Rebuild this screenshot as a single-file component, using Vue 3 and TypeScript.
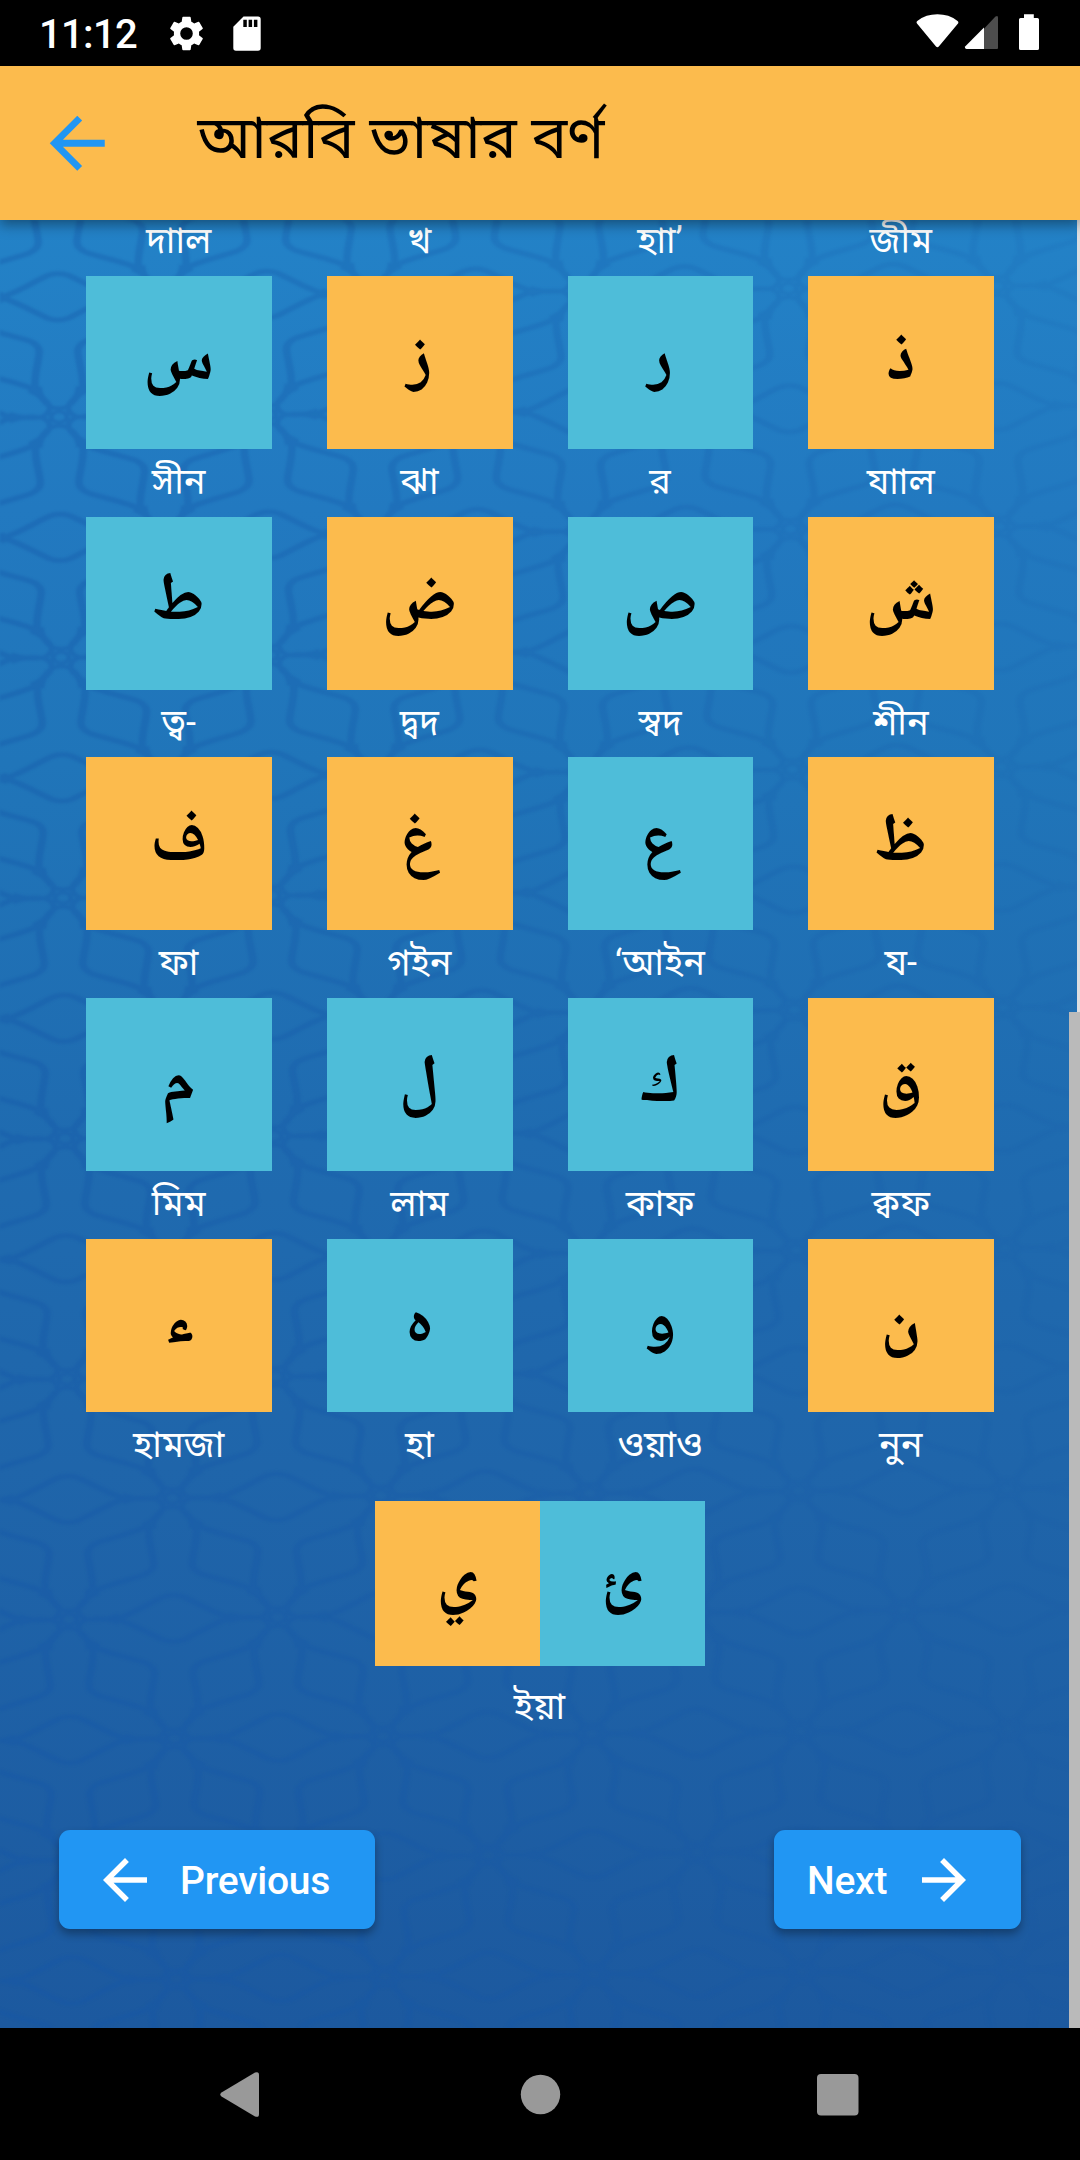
<script setup lang="ts">
type Tone = 'amber' | 'teal'

interface Letter {
  glyph: string
  name: string
  tone: Tone
}

const hiddenRowNames: string[] = ['দাাল', 'খ', 'হাা’', 'জীম']

const letters: Letter[] = [
  { glyph: 'س', name: 'সীন', tone: 'teal' },
  { glyph: 'ز', name: 'ঝা', tone: 'amber' },
  { glyph: 'ر', name: 'র', tone: 'teal' },
  { glyph: 'ذ', name: 'যাাল', tone: 'amber' },
  { glyph: 'ط', name: 'ত্ব-', tone: 'teal' },
  { glyph: 'ض', name: 'দ্বদ', tone: 'amber' },
  { glyph: 'ص', name: 'স্বদ', tone: 'teal' },
  { glyph: 'ش', name: 'শীন', tone: 'amber' },
  { glyph: 'ف', name: 'ফা', tone: 'amber' },
  { glyph: 'غ', name: 'গইন', tone: 'amber' },
  { glyph: 'ع', name: '‘আইন', tone: 'teal' },
  { glyph: 'ظ', name: 'য-', tone: 'amber' },
  { glyph: 'م', name: 'মিম', tone: 'teal' },
  { glyph: 'ل', name: 'লাম', tone: 'teal' },
  { glyph: 'ك', name: 'কাফ', tone: 'teal' },
  { glyph: 'ق', name: 'ক্বফ', tone: 'amber' },
  { glyph: 'ء', name: 'হামজা', tone: 'amber' },
  /* U+06D5 keeps the round isolated shape of the letter */
  { glyph: '\u06d5', name: 'হা', tone: 'teal' },
  { glyph: 'و', name: 'ওয়াও', tone: 'teal' },
  { glyph: 'ن', name: 'নুন', tone: 'amber' },
]

/* Star lattice of the backdrop: stars sit on the corners and in the middle of each tile. */
const stars: [number, number][] = [
  [0, 0], [208.7, 0], [0, 361.1], [208.7, 361.1], [104.35, 180.55],
]
const petalAngles: number[] = [30, 90, 150, 210, 270, 330]
const edgeAngles: number[] = [0, 60, 120, 180, 240, 300]
</script>

<template>
  <div class="screen">
    <div class="status">
      <span class="clock">11:12</span>
      <svg class="gear" viewBox="2 2 20 20"><path fill="#fff" fill-rule="evenodd" d="M19.14 12.94c.04-.3.06-.61.06-.94 0-.32-.02-.64-.07-.94l2.03-1.58a.49.49 0 0 0 .12-.61l-1.92-3.32a.49.49 0 0 0-.59-.22l-2.39.96c-.5-.38-1.03-.7-1.62-.94l-.36-2.54a.48.48 0 0 0-.48-.41h-3.84a.47.47 0 0 0-.47.41l-.36 2.54c-.59.24-1.13.57-1.62.94l-2.39-.96a.48.48 0 0 0-.59.22L2.74 8.87a.48.48 0 0 0 .12.61l2.03 1.58c-.05.3-.09.63-.09.94s.02.64.07.94l-2.03 1.58a.49.49 0 0 0-.12.61l1.92 3.32c.12.22.37.29.59.22l2.39-.96c.5.38 1.03.7 1.62.94l.36 2.54c.05.24.24.41.48.41h3.84c.24 0 .44-.17.47-.41l.36-2.54c.59-.24 1.13-.56 1.62-.94l2.39.96c.22.08.47 0 .59-.22l1.92-3.32a.47.47 0 0 0-.12-.61zM12 15.6a3.6 3.6 0 1 1 0-7.2 3.6 3.6 0 0 1 0 7.2z" /></svg>
      <svg class="sd" viewBox="0 0 28 35"><path fill="#fff" fill-rule="evenodd" d="M10.500 .5H25a2.700 2.700 0 0 1 2.700 2.700V32a2.700 2.700 0 0 1-2.700 2.700H3A2.700 2.700 0 0 1 .3 32V10.700zM10.300 3.700V11h3.500V3.700zM15.600 3.700V11h3.500V3.700zM20.900 3.700V11h3.500V3.700z" /></svg>
      <svg class="radio" viewBox="0 0 124 38">
        <path fill="#fff" d="M1.200 9.800Q-.3 8 1.600 6.700Q10 .3 21.400 .3Q33 .3 41.200 6.700Q43.200 8 41.800 9.800L22.800 32.400Q21.400 34 20 32.400Z" />
        <path fill="#4d4d4d" d="M68 14.800L79.500 2.600Q82 1 82 3.500V34a1 1 0 0 1-1 1H68z" />
        <path fill="#fff" d="M68 13.500V35H50.500Q48 34.500 49.400 32.300z" />
        <path fill="#fff" d="M108 .2h9.800V4h3.600a1.600 1.600 0 0 1 1.600 1.600v28.800a1.600 1.600 0 0 1-1.600 1.600h-16.800a1.600 1.600 0 0 1-1.600-1.600V5.600A1.600 1.600 0 0 1 104.600 4h3.400z" />
      </svg>
    </div>

    <header class="bar">
      <svg class="back" viewBox="0 0 24 24"><path fill="#2196f3" d="M20 11H7.830l5.590-5.590L12 4l-8 8 8 8 1.410-1.410L7.830 13H20z" /></svg>
      <h1>আরবি ভাষার বর্ণ</h1>
    </header>

    <main class="content">
      <svg class="backdrop" width="1080" height="1808" viewBox="0 220 1080 1808">
        <defs>
          <pattern id="stars" width="208.7" height="361.1" patternUnits="userSpaceOnUse" patternTransform="matrix(1 -0.0113 0.0055 0.666 69 1619.5)">
            <g v-for="(s, i) in stars" :key="i" :transform="`translate(${s[0]} ${s[1]})`" fill="none" stroke="#1456a8" stroke-width="7.5">
              <path v-for="a in petalAngles" :key="`p${a}`" :transform="`rotate(${a})`" d="M46 20C34 19 13 15 13 0C13-15 34-19 46-20" stroke-width="6" />
              <path v-for="a in edgeAngles" :key="`e${a}`" :transform="`rotate(${a})`" d="M24 0H46C60 4 80 23 94 32Q99 35 104.350 35M46 0C60-4 80-23 94-32Q99-35 104.350-35" />
              <circle r="8" stroke-width="5" />
            </g>
          </pattern>
          <linearGradient id="fade" x1="0" x2="1" y1="0" y2="0">
            <stop offset="0" stop-color="#fff" stop-opacity=".34" />
            <stop offset=".45" stop-color="#fff" stop-opacity=".24" />
            <stop offset="1" stop-color="#fff" stop-opacity=".09" />
          </linearGradient>
          <mask id="veil" maskUnits="userSpaceOnUse" x="0" y="220" width="1080" height="1808"><rect y="220" width="1080" height="1808" fill="url(#fade)" /></mask>
        </defs>
        <g mask="url(#veil)"><rect class="weave" y="220" width="1080" height="1808" fill="url(#stars)" /></g>
      </svg>

      <div class="names">
        <span v-for="n in hiddenRowNames" :key="n" class="name">{{ n }}</span>
      </div>
      <div class="grid">
        <div v-for="l in letters" :key="l.glyph" class="cell">
          <div class="tile" :class="l.tone"><span class="glyph">{{ l.glyph }}</span></div>
          <span class="name">{{ l.name }}</span>
        </div>
      </div>

      <div class="pair">
        <div class="half amber"><span class="glyph">ي</span></div>
        <div class="half teal"><span class="glyph">ئ</span></div>
      </div>
      <span class="name last">ইয়া</span>

      <div class="actions">
        <button class="prev">
          <svg viewBox="0 0 24 24"><path fill="#fff" d="M20 11H7.830l5.590-5.590L12 4l-8 8 8 8 1.410-1.410L7.830 13H20z" /></svg>
          <span>Previous</span>
        </button>
        <button class="next">
          <span>Next</span>
          <svg viewBox="0 0 24 24"><path fill="#fff" d="M4 11h12.170l-5.590-5.590L12 4l8 8-8 8-1.410-1.410L16.170 13H4z" /></svg>
        </button>
      </div>

      <div class="track"></div>
      <div class="thumb"></div>
    </main>

    <nav class="nav">
      <svg width="1080" height="132" viewBox="0 0 1080 132">
        <path fill="#999" d="M221.500 64.500L255 44.600Q259 43 259 47V86Q259 90 255 88.400L221.500 68.500Q219 66.500 221.500 64.500Z" />
        <circle cx="540.5" cy="66.500" r="19.700" fill="#999" />
        <rect x="817" y="46" width="41.500" height="41.500" rx="4" fill="#999" />
      </svg>
    </nav>
  </div>
</template>

<style>
body {
  margin: 0;
  background: #000;
}
</style>

<style scoped>
.screen {
  width: 1080px;
  height: 2160px;
  display: flex;
  flex-direction: column;
  overflow: hidden;
  font-family: Roboto, "Noto Sans", "Noto Sans Bengali", sans-serif;
}
.status {
  height: 66px;
  flex: none;
  box-sizing: border-box;
  padding: 0 40px 0 39px;
  display: flex;
  align-items: center;
  background: #000;
}
.clock {
  width: 130px;
  padding-top: 3px;
  font-size: 40px;
  font-weight: 500;
  line-height: 66px;
  letter-spacing: -0.7px;
  color: #fff;
  white-space: nowrap;
}
.gear {
  width: 35px;
  height: 35px;
}
.sd {
  width: 28px;
  height: 35px;
  margin-left: 29px;
}
.radio {
  width: 124px;
  height: 38px;
  margin-left: auto;
}
.bar {
  height: 154px;
  flex: none;
  display: flex;
  align-items: center;
  background: #fcbb4d;
  box-shadow: 0 5px 12px rgba(0, 0, 0, 0.38);
  position: relative;
  z-index: 2;
}
.back {
  width: 82.5px;
  height: 82.5px;
  margin-left: 36px;
}
.bar h1 {
  margin: 0 0 11px 79px;
  font-size: 60px;
  font-weight: 400;
  line-height: 80px;
  color: #000;
  white-space: nowrap;
}
.content {
  position: relative;
  height: 1808px;
  flex: none;
  overflow: hidden;
  background: linear-gradient(#2382c7, #2279c0 16%, #2075b9 30%, #1f6bb0 51%, #1f65aa 69%, #1c599f);
}
.backdrop {
  position: absolute;
  left: 0;
  top: 0;
}
.weave {
  filter: blur(1.2px);
}
.names,
.grid {
  position: relative;
  display: grid;
  grid-template-columns: repeat(4, 185.5px);
  column-gap: 55.2px;
  margin-left: 86.4px;
}
.names {
  margin-top: -11.6px;
}
.cell {
  height: 240.7px;
  display: flex;
  flex-direction: column;
}
.tile {
  height: 173px;
  box-sizing: border-box;
  padding: 2px 1px 0 0;
  display: flex;
  align-items: center;
  justify-content: center;
}
.amber {
  background: #fcbb4d;
}
.teal {
  background: #4ebdd9;
}
.glyph {
  font-family: "Noto Naskh Arabic", "Noto Sans Arabic", "DejaVu Sans", sans-serif;
  font-size: 67px;
  font-weight: 700;
  line-height: 100px;
  color: #000;
}
.name {
  height: 67.700px;
  padding-right: 1px;
  line-height: 67px;
  font-size: 36px;
  text-align: center;
  color: #fff;
  white-space: nowrap;
}
.pair {
  position: relative;
  display: flex;
  justify-content: center;
  margin-top: 21px;
}
.half {
  width: 165px;
  height: 165px;
  display: flex;
  align-items: center;
  justify-content: center;
}
.last {
  position: relative;
  display: block;
  padding-top: 8px;
}
.actions {
  position: relative;
  display: flex;
  justify-content: space-between;
  margin: 89px 59px 0;
}
button {
  height: 99px;
  box-sizing: border-box;
  border: 0;
  border-radius: 11px;
  display: flex;
  align-items: center;
  background: #2196f3;
  box-shadow: 0 5px 8px rgba(0, 0, 0, 0.32);
  color: #fff;
  font: 500 39px Roboto, sans-serif;
  letter-spacing: -0.25px;
}
button span {
  padding-top: 2px;
}
button svg {
  width: 66px;
  height: 66px;
}
.prev {
  width: 316px;
  padding: 0 0 0 33px;
  gap: 22px;
}
.next {
  width: 247px;
  padding: 0 0 0 33px;
  gap: 24px;
}
.track {
  position: absolute;
  right: 0;
  top: 0;
  width: 3px;
  height: 792px;
  background: #dedee0;
}
.thumb {
  position: absolute;
  right: 0;
  top: 792px;
  width: 11px;
  height: 1016px;
  background: #bababa;
}
.nav {
  height: 132px;
  flex: none;
  background: #000;
}
.nav svg {
  display: block;
}
</style>
